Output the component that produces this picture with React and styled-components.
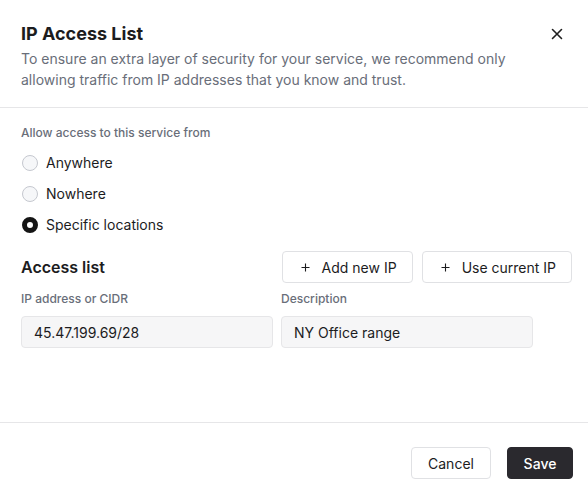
import React, { useState } from "react";
import styled, { createGlobalStyle } from "styled-components";

const GlobalStyle = createGlobalStyle`
  * { box-sizing: border-box; }
  body {
    margin: 0;
    background: #ffffff;
    font-family: Inter, "Noto Sans", sans-serif;
    color: #1f1f1f;
  }
`;

const options = [
  { id: "anywhere", label: "Anywhere" },
  { id: "nowhere", label: "Nowhere" },
  { id: "specific", label: "Specific locations" },
];

const PlusIcon = () => (
  <svg width="9" height="9" viewBox="0 0 9 9">
    <path d="M4.5 0.5 V8.5 M0.5 4.5 H8.5" stroke="#1c1c1e" strokeWidth="1.1" />
  </svg>
);

export default function App() {
  const [access, setAccess] = useState("specific");
  const [ip, setIp] = useState("45.47.199.69/28");
  const [desc, setDesc] = useState("NY Office range");

  return (
    <>
      <GlobalStyle />
      <Modal>
        <Header>
          <TitleRow>
            <Title>IP Access List</Title>
            <CloseButton aria-label="Close">
              <svg width="12" height="12" viewBox="0 0 12 12">
                <path d="M1.5 1.5 L10.5 10.5 M10.5 1.5 L1.5 10.5" stroke="#1f1f1f" strokeWidth="1.6" strokeLinecap="round" />
              </svg>
            </CloseButton>
          </TitleRow>
          <Description>
            To ensure an extra layer of security for your service, we recommend only
            allowing traffic from IP addresses that you know and trust.
          </Description>
        </Header>

        <Body>
          <FieldLabel>Allow access to this service from</FieldLabel>
          <RadioGroup>
            {options.map((o) => (
              <RadioRow key={o.id} onClick={() => setAccess(o.id)}>
                <RadioDot $checked={access === o.id} />
                <RadioText>{o.label}</RadioText>
              </RadioRow>
            ))}
          </RadioGroup>

          <ListHeader>
            <SectionTitle>Access list</SectionTitle>
            <Actions>
              <GhostButton><PlusIcon />Add new IP</GhostButton>
              <GhostButton><PlusIcon />Use current IP</GhostButton>
            </Actions>
          </ListHeader>

          <Grid>
            <FieldLabel>IP address or CIDR</FieldLabel>
            <FieldLabel>Description</FieldLabel>
            <Input value={ip} onChange={(e) => setIp(e.target.value)} />
            <Input value={desc} onChange={(e) => setDesc(e.target.value)} />
          </Grid>
        </Body>

        <Footer>
          <CancelButton>Cancel</CancelButton>
          <SaveButton>Save</SaveButton>
        </Footer>
      </Modal>
    </>
  );
}

const Modal = styled.div`
  width: 588px;
  height: 492px;
  display: flex;
  flex-direction: column;
  background: #ffffff;
`;

const Header = styled.div`
  padding: 20px 16px 17px 21px;
  border-bottom: 1px solid #e6e6e8;
`;

const TitleRow = styled.div`
  display: flex;
  align-items: center;
  justify-content: space-between;
  height: 28px;
`;

const Title = styled.h1`
  margin: 0;
  font-size: 18px;
  line-height: 28px;
  font-weight: 700;
  color: #1c1c1e;
`;

const CloseButton = styled.button`
  width: 24px;
  height: 24px;
  margin-right: 3px;
  padding: 0;
  border: none;
  background: none;
  display: flex;
  align-items: center;
  justify-content: center;
  cursor: pointer;
`;

const Description = styled.p`
  margin: 0;
  font-size: 14px;
  line-height: 21px;
  color: #696e79;
  max-width: 500px;
`;

const Body = styled.div`
  flex: 1;
  padding: 17px 16px 0 21px;
`;

const FieldLabel = styled.div`
  font-size: 12px;
  line-height: 16px;
  font-weight: 500;
  color: #696e79;
`;

const RadioGroup = styled.div`
  display: flex;
  flex-direction: column;
  gap: 7px;
  margin-top: 10px;
`;

const RadioRow = styled.label`
  display: flex;
  align-items: center;
  gap: 8px;
  height: 24px;
  cursor: pointer;
`;

const RadioDot = styled.span`
  width: 16px;
  height: 16px;
  margin-left: 1px;
  border-radius: 50%;
  background: ${(p) => (p.$checked ? "#ffffff" : "#f6f7f9")};
  border: ${(p) => (p.$checked ? "5px solid #151515" : "1px solid #c5c8cf")};
`;

const RadioText = styled.span`
  font-size: 14px;
  line-height: 20px;
  color: #1c1c1e;
`;

const ListHeader = styled.div`
  display: flex;
  align-items: center;
  justify-content: space-between;
  margin-top: 14px;
`;

const SectionTitle = styled.h2`
  margin: 0;
  font-size: 16px;
  font-weight: 600;
  color: #1c1c1e;
`;

const Actions = styled.div`
  display: flex;
  gap: 9px;
`;

const GhostButton = styled.button`
  height: 32px;
  padding: 0 15px 0 18px;
  display: flex;
  align-items: center;
  gap: 12px;
  font-family: inherit;
  font-size: 14px;
  color: #1c1c1e;
  background: #ffffff;
  border: 1px solid #e0e1e4;
  border-radius: 4px;
  cursor: pointer;
`;

const Grid = styled.div`
  display: grid;
  grid-template-columns: 252px 252px;
  column-gap: 8px;
  row-gap: 9px;
  margin-top: 8px;
`;

const Input = styled.input`
  height: 32px;
  padding: 0 12px;
  font-family: inherit;
  font-size: 14px;
  color: #1c1c1e;
  background: #f6f6f7;
  border: 1px solid #e6e6e8;
  border-radius: 4px;
  outline: none;
`;

const Footer = styled.div`
  display: flex;
  justify-content: flex-end;
  gap: 16px;
  padding: 24px 15px 13px 21px;
  border-top: 1px solid #e6e6e8;
`;

const CancelButton = styled.button`
  width: ${(p) => p.$width || 80}px;
  height: 32px;
  padding: 0;
  font-family: inherit;
  font-size: 14px;
  color: #1c1c1e;
  background: #ffffff;
  border: 1px solid #e0e1e4;
  border-radius: 4px;
  cursor: pointer;
`;

const SaveButton = styled(CancelButton).attrs({ $width: 66 })`
  font-weight: 500;
  color: #ffffff;
  background: #2a292e;
  border-color: #2a292e;
`;
